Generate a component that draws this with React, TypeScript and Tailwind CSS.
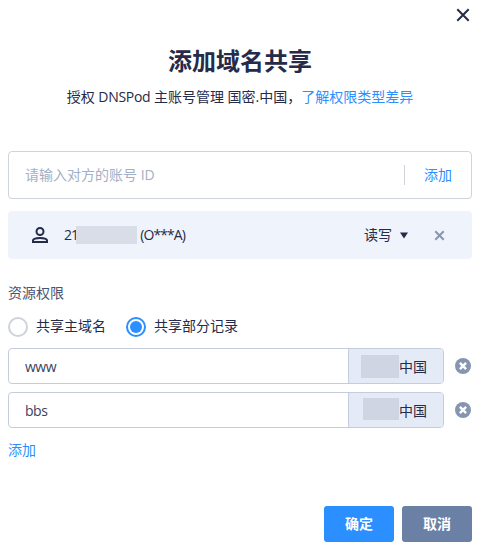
import { useState } from "react";

interface RecordRow {
  id: number;
  name: string;
  // size of the grey block that hides the domain
  mask: string;
}

const defaultRecords: RecordRow[] = [
  { id: 1, name: "www", mask: "w-[38px] h-[23px]" },
  { id: 2, name: "bbs", mask: "w-[36px] h-[22px] mb-0.5" },
];

function CloseIcon() {
  return (
    <svg width="14" height="14" viewBox="0 0 14 14" fill="none" stroke="#252b48" strokeWidth="2">
      <path d="M1.3 1.3L12.7 12.7M12.7 1.3L1.3 12.7" />
    </svg>
  );
}

function UserIcon() {
  return (
    <svg width="16" height="16" viewBox="0 0 16 16" fill="none" stroke="#252b48" strokeWidth="2">
      <circle cx="8" cy="4.5" r="3.5" />
      <path d="M1 15V13.6C1 11.8 4.4 10.9 8 10.9S15 11.8 15 13.6V15Z" />
    </svg>
  );
}

function RemoveIcon() {
  return (
    <svg width="16" height="16" viewBox="0 0 16 16">
      <circle cx="8" cy="8" r="8" fill="#8796b0" />
      <path d="M4.9 4.9L11.1 11.1M11.1 4.9L4.9 11.1" stroke="#fff" strokeWidth="2.4" />
    </svg>
  );
}

function Radio({ label, checked, onClick }: { label: string; checked: boolean; onClick: () => void }) {
  return (
    <button className="flex items-center" onClick={onClick}>
      <span className={checked ? "flex size-5 items-center justify-center rounded-full border-2 border-[#2b8fff]" : "flex size-5 rounded-full border-2 border-[#ced2dc]"}>
        {checked && <span className="size-3 rounded-full bg-[#2b8fff]"></span>}
      </span>
      <span className="-mt-0.5 ml-2 leading-5">{label}</span>
    </button>
  );
}

export default function App() {

  const [records, setRecords] = useState<RecordRow[]>(defaultRecords);
  const [scope, setScope] = useState("part");

  function removeRecord(id: number) {
    setRecords(records.filter((record) => record.id !== id));
  }

  function addRecord() {
    setRecords([...records, { id: Date.now(), name: "", mask: "w-[38px] h-[23px]" }]);
  }

  return (
    <main className="h-[546px] w-[486px] overflow-hidden bg-white pr-[14px] pl-2 font-['Open_Sans','Noto_Sans_CJK_SC',sans-serif] text-[14px] leading-5 text-[#252b48]">
      <div className="flex h-[30px] items-center justify-end pr-0.5">
        <button><CloseIcon /></button>
      </div>

      <h1 className="mt-[13px] text-center text-2xl leading-9 font-bold">添加域名共享</h1>
      <p className="mt-2 text-center whitespace-pre">
        授权 <span className="tracking-[-0.3px]">DNSPod</span> 主账号管理 国密.中国，<a className="text-[#2b8fff]">了解权限类型差异</a>
      </p>

      {/* account input */}
      <div className="mt-11 flex h-12 items-center rounded border border-[#cfd3dc] pr-[19px] pl-4">
        <input className="min-w-0 flex-1 outline-none placeholder:text-[#a3afc4]" placeholder="请输入对方的账号 ID" />
        <span className="h-5 w-px bg-[#cfd3dc]"></span>
        <button className="ml-[19px] text-[#2b8fff]">添加</button>
      </div>

      {/* shared account */}
      <div className="mt-3 flex h-12 items-center rounded bg-[#eef3fc] pr-[27px] pl-6">
        <UserIcon />
        <span className="ml-4 tracking-[-0.9px]">21</span>
        <span className="-ml-0.5 h-[18px] w-[61px] bg-[#d8dde8]"></span>
        <span className="ml-[3px] tracking-[-0.9px]">(O***A)</span>
        <span className="ml-auto">读写</span>
        <svg className="ml-2" width="8" height="7" viewBox="0 0 8 7"><path d="M0 0.5H8L4 6.5Z" fill="#252b48" /></svg>
        <svg className="ml-[26px]" width="11" height="11" viewBox="0 0 11 11" stroke="#8796b0" strokeWidth="2"><path d="M1.3 1.3L9.7 9.7M9.7 1.3L1.3 9.7" /></svg>
      </div>

      <p className="mt-6 text-[#4b5370]">资源权限</p>
      <div className="mt-3.5 flex gap-5">
        <Radio label="共享主域名" checked={scope === "all"} onClick={() => setScope("all")} />
        <Radio label="共享部分记录" checked={scope === "part"} onClick={() => setScope("part")} />
      </div>

      <div className="mt-[11px] flex flex-col gap-2">
        {records.map((record) => (
          <div key={record.id} className="flex items-center">
            <div className="flex h-9 w-[436px] overflow-hidden rounded border border-[#c5cddd]">
              <input className="min-w-0 flex-1 px-4 pt-0.5 tracking-[-0.5px] text-[#3a4260] outline-none" defaultValue={record.name} />
              <div className="flex w-[95px] items-center justify-end border-l border-[#c5cddd] bg-[#e5ebf6] pr-4">
                <span className={`${record.mask} bg-[#cfd5e2]`}></span>
                <span className="pt-0.5">中国</span>
              </div>
            </div>
            <button className="ml-[11px]" onClick={() => removeRecord(record.id)}><RemoveIcon /></button>
          </div>
        ))}
      </div>
      <button className="mt-3 block leading-5 text-[#2b8fff]" onClick={addRecord}>添加</button>

      <div className="mt-[46px] flex justify-end gap-2 font-bold text-white">
        <button className="h-9 w-[70px] rounded-[3px] bg-[#2b8fff]">确定</button>
        <button className="h-9 w-[70px] rounded-[3px] bg-[#6b80a5]">取消</button>
      </div>
    </main>
  );
}
